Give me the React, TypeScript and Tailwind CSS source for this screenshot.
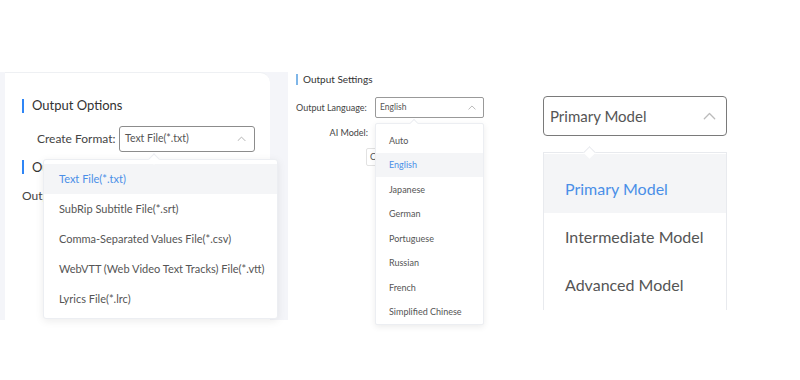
import React from "react";

const font = { fontFamily: 'Lato, "Noto Sans", sans-serif' };

const ChevronUp = ({ size = 10, className = "" }: { size?: number; className?: string }) => (
  <svg width={size} height={size * 0.6} viewBox="0 0 10 6" fill="none" className={className}>
    <path d="M1 5.2 5 1.2l4 4" stroke="currentColor" strokeWidth="1" strokeLinecap="round" strokeLinejoin="round" />
  </svg>
);

const formats = [
  "Text File(*.txt)",
  "SubRip Subtitle File(*.srt)",
  "Comma-Separated Values File(*.csv)",
  "WebVTT (Web Video Text Tracks) File(*.vtt)",
  "Lyrics File(*.lrc)",
];

const languages = [
  "Auto",
  "English",
  "Japanese",
  "German",
  "Portuguese",
  "Russian",
  "French",
  "Simplified Chinese",
];

const models = ["Primary Model", "Intermediate Model", "Advanced Model"];

const OutputOptions = () => (
  <div className="relative mt-[72px] h-[248px] w-[288px] bg-[#f4f5f9]">
    <div className="ml-[5px] h-full w-[265px] rounded-tr-[10px] border-t border-[#eef0f3] bg-white pl-[17px] pt-[23px]">
      {/* Header */}
      <div className="flex items-center gap-[8px]">
        <span className="h-[14px] w-[2px] bg-[#2f86f6]" />
        <span className="whitespace-nowrap text-[13px] text-[#333]">Output Options</span>
      </div>
      <div className="mt-[10px] flex items-center pl-[15px]">
        <span className="w-[82px] whitespace-nowrap text-[12px] text-[#444]">Create Format:</span>
        <div className="flex h-[26px] w-[136px] items-center justify-between rounded-[3px] border border-[#8c8c8c] px-[5px] text-[#aaa]">
          <span className="whitespace-nowrap text-[10.5px] text-[#555]">Text File(*.txt)</span>
          <ChevronUp size={9} className="mr-[3px]" />
        </div>
      </div>
      <div className="mt-[6px] flex items-center gap-[8px]">
        <span className="h-[14px] w-[2px] bg-[#2f86f6]" />
        <span className="text-[13px] text-[#333]">Output</span>
      </div>
      <div className="mt-[10px] text-[12px] text-[#444]">Output</div>
    </div>

    {/* Format dropdown */}
    <div className="absolute left-[43px] top-[87px] w-[235px] rounded-[3px] border border-[#eceef2] bg-white py-[4px] shadow-[0_2px_8px_rgba(0,0,0,0.08)]">
      <span className="absolute -top-[5px] left-[106px] h-[8px] w-[8px] rotate-45 border-l border-t border-[#eceef2] bg-white" />
      {formats.map((f, i) => (
        <div
          key={f}
          className={`flex h-[30px] items-center whitespace-nowrap pl-[15px] text-[11px] ${
            i === 0 ? "bg-[#f4f5f7] text-[#4a8fe7]" : "text-[#555]"
          }`}
        >
          {f}
        </div>
      ))}
    </div>
  </div>
);

const OutputSettings = () => (
  <div className="relative ml-[8px] mt-[72px] w-[200px]">
    <div className="flex items-center gap-[5px]">
      <span className="h-[11px] w-[2px] bg-[#7fb6e8]" />
      <span className="whitespace-nowrap text-[10px] text-[#333]">Output Settings</span>
    </div>
    <div className="mt-[10px] flex items-center">
      <span className="w-[79px] whitespace-nowrap text-[9px] text-[#444]">Output Language:</span>
      <div className="flex h-[21px] w-[109px] items-center justify-between rounded-[2px] border border-[#999] px-[4px] text-[#aaa]">
        <span className="text-[8.5px] text-[#555]">English</span>
        <ChevronUp size={8} className="mr-[3px]" />
      </div>
    </div>
    <div className="mt-[8px] flex items-center">
      <span className="w-[72px] whitespace-nowrap text-right text-[9px] text-[#444]">AI Model:</span>
    </div>
    <div className="ml-[70px] mt-[8px] flex h-[18px] w-[20px] items-center rounded-[2px] border border-[#e2e2e2] pl-[3px] text-[9px] text-[#555]">
      C
    </div>

    {/* Language dropdown */}
    <div className="absolute left-[79px] top-[51px] w-[109px] rounded-[2px] border border-[#eceef2] bg-white pt-[4px] shadow-[0_2px_6px_rgba(0,0,0,0.08)]">
      <span className="absolute -top-[4px] left-[35px] h-[6px] w-[6px] rotate-45 border-l border-t border-[#eceef2] bg-white" />
      {languages.map((l, i) => (
        <div
          key={l}
          className={`flex h-[24.5px] items-center whitespace-nowrap pl-[13px] text-[9px] ${
            i === 1 ? "bg-[#f4f5f7] text-[#4a8fe7]" : "text-[#555]"
          }`}
        >
          {l}
        </div>
      ))}
    </div>
  </div>
);

const ModelSelect = () => (
  <div className="relative ml-[47px] mt-[96px] w-[184px]">
    <div className="flex h-[40px] items-center justify-between rounded-[4px] border border-[#7a7a7a] px-[6px] text-[#bbb]">
      <span className="whitespace-nowrap text-[15px] text-[#555]">Primary Model</span>
      <ChevronUp size={13} className="mr-[4px]" />
    </div>
    <div className="relative mt-[16px] h-[158px] w-[184px] border-x border-t border-[#e8eaee] bg-white pt-[1px]">
      <span className="absolute -top-[5px] left-[41px] h-[9px] w-[9px] rotate-45 border-l border-t border-[#e8eaee] bg-white" />
      {models.map((m, i) => (
        <div
          key={m}
          className={`flex items-center whitespace-nowrap pl-[21px] text-[16px] ${
            i === 0 ? "h-[59px] bg-[#f4f5f7] pt-[10px] text-[#4a8fe7]" : "h-[48px] text-[#555]"
          }`}
        >
          {m}
        </div>
      ))}
    </div>
  </div>
);

export default function App() {
  return (
    <div className="flex h-[380px] w-[800px] items-start bg-white" style={font}>
      <OutputOptions />
      <OutputSettings />
      <ModelSelect />
    </div>
  );
}
